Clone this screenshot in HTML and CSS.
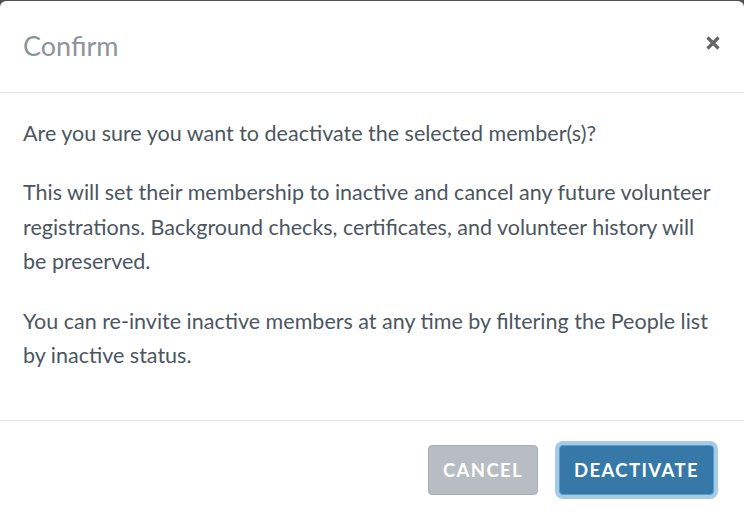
FILE: index.html
```html
<!DOCTYPE html>
<html>
<head>
<meta charset="utf-8">
<link rel="stylesheet" href="styles.css">
</head>
<body>
<div class="modal">
  <div class="modal-header">
    <h2 class="modal-title">Confirm</h2>
    <button class="close" aria-label="Close">
      <svg width="14" height="14" viewBox="0 0 14 14"><path d="M1.5 1.5 L12.5 12.5 M12.5 1.5 L1.5 12.5" stroke="#666" stroke-width="3.2" stroke-linecap="butt"/></svg>
    </button>
  </div>
  <div class="modal-body">
    <p>Are you sure you want to deactivate the selected member(s)?</p>
    <p>This will set their membership to inactive and cancel any future volunteer registrations. Background checks, certificates, and volunteer history will be preserved.</p>
    <p>You can re-invite inactive members at any time by filtering the People list by inactive status.</p>
  </div>
  <div class="modal-footer">
    <button class="btn btn-cancel">Cancel</button>
    <button class="btn btn-primary">Deactivate</button>
  </div>
</div>
</body>
</html>
```
FILE: styles.css
```css
html, body {
  margin: 0;
  padding: 0;
  height: 100%;
}
body {
  background: #4f4f4f;
  font-family: Lato, "Open Sans", sans-serif;
  padding-top: 1px;
  box-sizing: border-box;
  overflow: hidden;
}
.modal {
  background: #fff;
  border-radius: 6px 6px 0 0;
  height: 100%;
}
.modal-header {
  display: flex;
  align-items: center;
  justify-content: space-between;
  height: 92px;
  box-sizing: border-box;
  padding: 0 23px;
  border-bottom: 1px solid #e3e6ea;
}
.modal-title {
  margin: 0;
  font-size: 27px;
  font-weight: 400;
  color: #8b949d;
  margin-top: -2px;
}
.close {
  background: none;
  border: 0;
  padding: 0;
  width: 14px;
  height: 14px;
  margin-top: -8px;
  margin-right: 1px;
  display: flex;
}
.modal-body {
  padding: 23px 23px 0;
  height: 328px;
  box-sizing: border-box;
  border-bottom: 1px solid #e3e6ea;
}
.modal-body p {
  margin: 0 0 25px;
  font-size: 21.5px;
  line-height: 34.4px;
  color: #4b5661;
}
.modal-footer {
  display: flex;
  justify-content: flex-end;
  gap: 21px;
  padding: 24px 30px 0 0;
}
.btn {
  font-family: Lato, sans-serif;
  font-weight: 700;
  font-size: 18.5px;
  letter-spacing: 1.4px;
  text-transform: uppercase;
  color: #fff;
  height: 50px;
  border-radius: 4px;
  padding: 0;
  cursor: pointer;
}
.btn-cancel {
  background: #b8bdc4;
  border: 1px solid #a9aeb4;
  width: 110px;
}
.btn-primary {
  background: #3679a8;
  border: 1px solid #4e9fd9;
  width: 155px;
  box-shadow: 0 0 0 4px #a8cbe4;
}
```
